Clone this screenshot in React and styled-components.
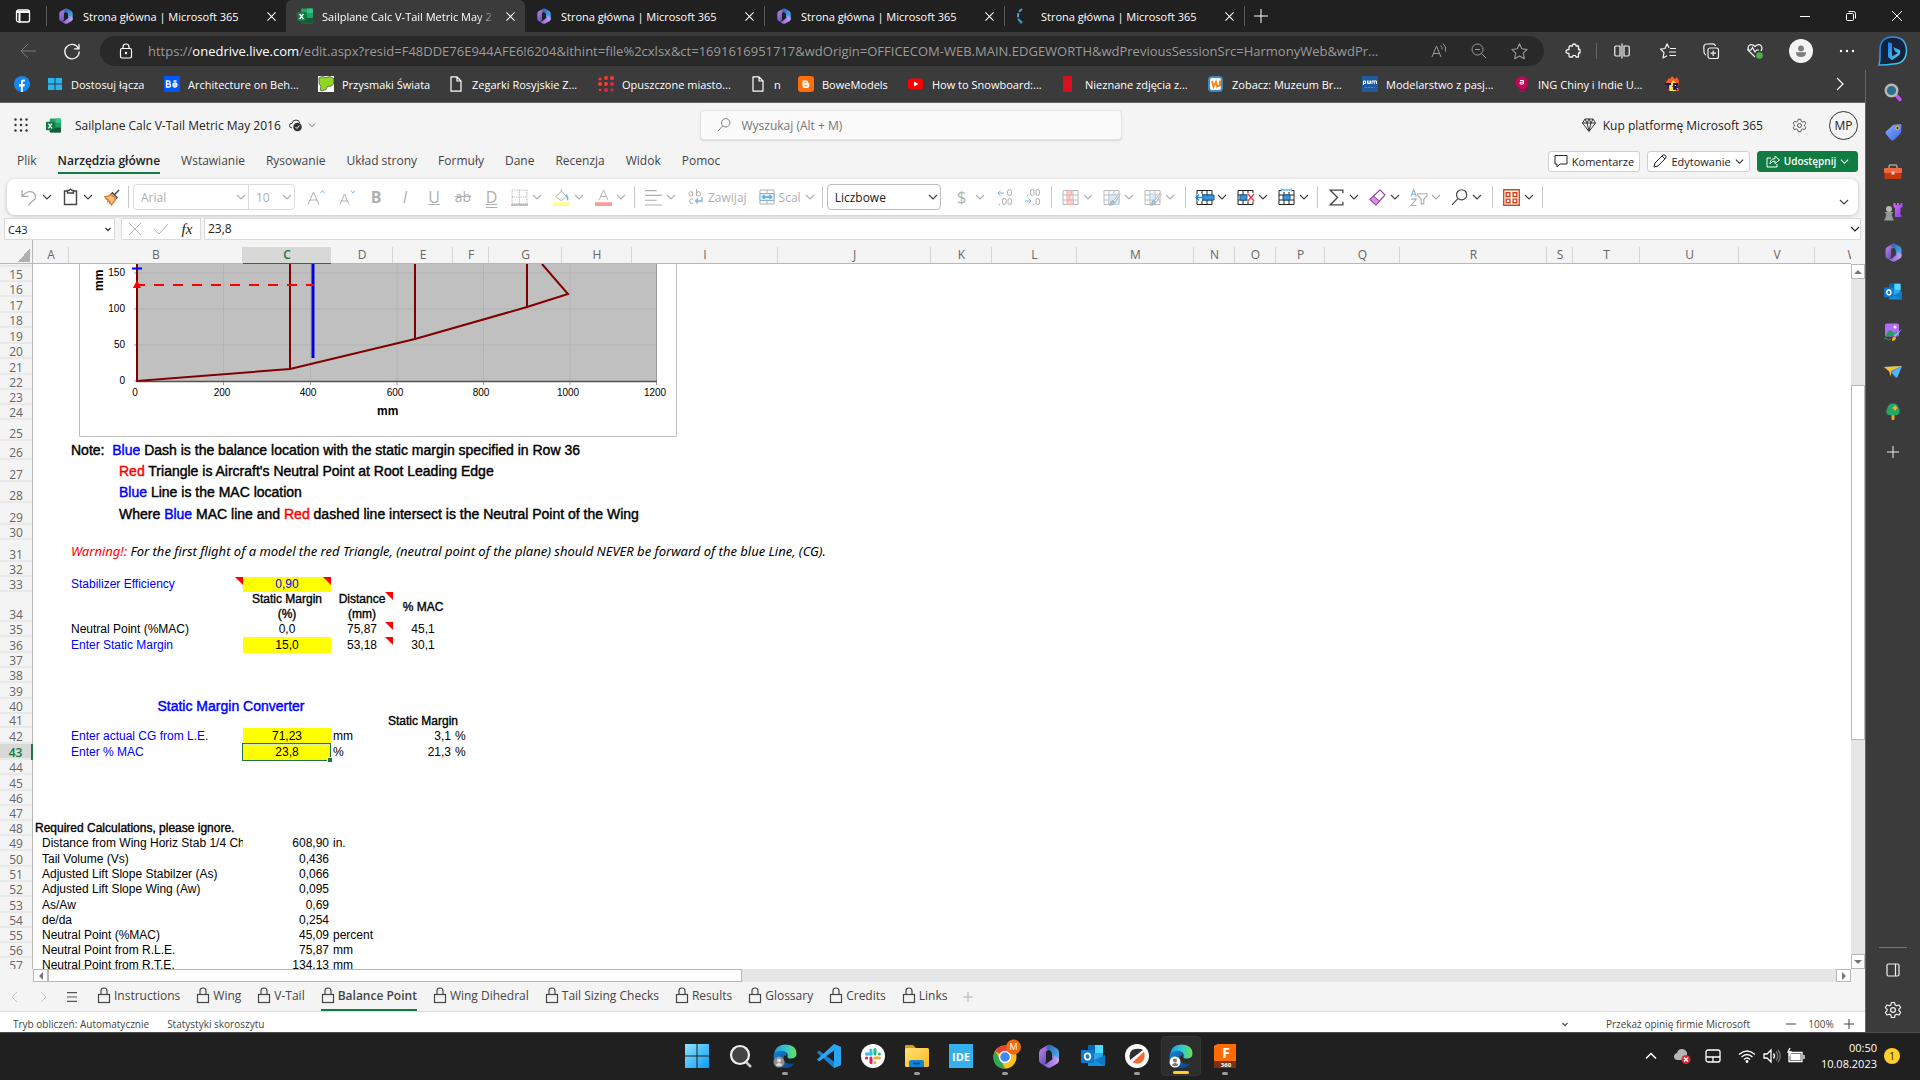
import { Fragment } from 'react';
import styled, { createGlobalStyle, css } from 'styled-components';

const GlobalStyle = createGlobalStyle`
  * {
    box-sizing: border-box;
  }

  body {
    margin: 0;
    font-family: 'Open Sans', 'Noto Sans', sans-serif;
    font-size: 12px;
    color: #333;
    background-color: #202020;
  }

  button, input, select {
    font-family: inherit;
    font-size: inherit;
    color: inherit;
    margin: 0;
  }

  a {
    color: inherit;
    text-decoration: none;
  }
`;

/* ---------- icons ---------- */

const Svg = styled.svg`
  display: block;
  flex: none;
  width: ${({ $w }) => $w || 16}px;
  height: ${({ $h, $w }) => $h || $w || 16}px;
  overflow: visible;
`;

const Line = ({ w, h, box = '0 0 16 16', color = 'currentColor', sw = 1, children }) => (
  <Svg $w={w} $h={h} viewBox={box} fill="none" stroke={color} strokeWidth={sw} aria-hidden="true">
    {children}
  </Svg>
);

const Defs = () => (
  <Svg $w={1} $h={1} aria-hidden="true">
    <defs>
      <linearGradient id="m365a" x1="0" y1="0" x2="1" y2="1">
        <stop offset="0" stopColor="#c48bea" />
        <stop offset="1" stopColor="#4a3bb0" />
      </linearGradient>
      <linearGradient id="m365b" x1="0" y1="0" x2="1" y2="1">
        <stop offset="0" stopColor="#2a56b8" />
        <stop offset="1" stopColor="#56c3f5" />
      </linearGradient>
      <linearGradient id="m365c" x1="0" y1="0" x2="1" y2="0">
        <stop offset="0" stopColor="#6a5bd0" />
        <stop offset="1" stopColor="#d59bf0" />
      </linearGradient>
      <linearGradient id="edgeTop" x1="0" y1="0" x2="1" y2="0">
        <stop offset="0" stopColor="#1c9de0" />
        <stop offset="0.5" stopColor="#2fc3d6" />
        <stop offset="1" stopColor="#6be34c" />
      </linearGradient>
      <linearGradient id="edgeLow" x1="0" y1="0" x2="1" y2="1">
        <stop offset="0" stopColor="#1683d8" />
        <stop offset="1" stopColor="#0c3f80" />
      </linearGradient>
      <linearGradient id="win" x1="0" y1="0" x2="1" y2="1">
        <stop offset="0" stopColor="#8fe3ff" />
        <stop offset="1" stopColor="#0a9bf5" />
      </linearGradient>
      <linearGradient id="bing" x1="0" y1="0" x2="1" y2="1">
        <stop offset="0" stopColor="#1a78f0" />
        <stop offset="1" stopColor="#4fd8f0" />
      </linearGradient>
      <linearGradient id="folder" x1="0" y1="0" x2="1" y2="1">
        <stop offset="0" stopColor="#ffe27a" />
        <stop offset="1" stopColor="#fbb81a" />
      </linearGradient>
      <linearGradient id="purple" x1="0" y1="0" x2="1" y2="1">
        <stop offset="0" stopColor="#d36bff" />
        <stop offset="1" stopColor="#8a3fe8" />
      </linearGradient>
      <linearGradient id="tagBlue" x1="0" y1="0" x2="1" y2="1">
        <stop offset="0" stopColor="#86b4ff" />
        <stop offset="1" stopColor="#3f63e8" />
      </linearGradient>
    </defs>
  </Svg>
);

const Chevron = ({ w = 10, color = 'currentColor' }) => (
  <Line w={w} box="0 0 10 10" color={color} sw={1.2}><path d="M1 3l4 4 4-4" /></Line>
);

const M365 = ({ w = 16 }) => (
  <Svg $w={w} viewBox="0 0 24 24" aria-hidden="true">
    <path d="M11 1L4 5Q2 6.300 2 9v7q0 2.500 2 3.500l1 .5q4 1 4-3V9q0-2 2-3l4-2-2-3z" fill="url(#m365a)" />
    <path d="M11 1q2-.8 4 .5l5 3Q22 6 22 8v8q0 2-2 3.300L15 14V10q0-2-1.500-3L9 4.500z" fill="url(#m365b)" />
    <path d="M4 19.500q4 2 7-1l4-3q2-1.500 2-4l5 3v2q0 2-2 3.200l-6 3.500q-2 1-4 0z" fill="url(#m365c)" />
  </Svg>
);

const ExcelLogo = ({ w = 16 }) => (
  <Svg $w={w} viewBox="0 0 16 16" aria-hidden="true">
    <rect x="4" y="0.500" width="12" height="15" rx="1" fill="#21a366" />
    <path d="M10 .5h5q1 0 1 1V5h-6z" fill="#33c481" />
    <path d="M4 5h6v5H4z" fill="#107c41" />
    <path d="M4 10h12v4.500q0 1-1 1H5q-1 0-1-1z" fill="#185c37" />
    <rect x="0" y="4" width="9" height="9" rx="1" fill="#107c41" />
    <path d="M2.600 6l3.800 5M6.400 6l-3.800 5" stroke="#fff" strokeWidth="1.300" />
  </Svg>
);

const Lock = ({ w = 14, h = 18, color }) => (
  <Line w={w} h={h} box="0 0 14 18" color={color} sw={1.2}>
    <rect x="1.500" y="7.500" width="11" height="8" />
    <path d="M4 7.500V4q0-3 3-3t3 3v3.500" />
  </Line>
);

const PageIcon = () => (
  <Line w={16} color="#fff" sw={1.2}>
    <path d="M3 .8h6L13 5v10.200H3zM9 .8V5h4" strokeLinejoin="round" />
  </Line>
);

const EdgeLogo = ({ person = '#8d8d8d', face = '#ddd' }) => (
  <Svg $w={24} viewBox="0 0 24 24" aria-hidden="true">
    <path d="M1 11Q2 .5 12.500.5 23.500 1 23.500 9.500q0 5-6 5-3.500 0-3-2 1-4-3.500-5Q5 7 1 11z" fill="url(#edgeTop)" />
    <path d="M1 10q4-4.500 9-3 4 1 3.500 4-4 1-3 5 2 5 11 3.500-3 4.500-9 4.500Q1 23 .5 12.500z" fill="url(#edgeLow)" />
    <circle cx="6" cy="18" r="5.500" fill={person} />
    <circle cx="6" cy="16.500" r="2" fill={face} />
    <path d="M3 21.500q0-2.500 3-2.500t3 2.500q-3 1.500-6 0z" fill={face} />
  </Svg>
);

const OutlookLogo = ({ w = 18 }) => (
  <Svg $w={w} viewBox="0 0 24 24" aria-hidden="true">
    <rect x="7" y="1" width="15" height="16" rx="1" fill="#28a8ea" />
    <path d="M7 1h7v8H7z" fill="#0364b8" />
    <path d="M14 1h8v8h-8z" fill="#50d9ff" />
    <path d="M7 12l9 5 8-6v11H7z" fill="#1490df" />
    <path d="M24 11v11L13 16z" fill="#0a5fb0" opacity="0.500" />
    <rect x="0" y="6" width="13" height="13" rx="1" fill="#0f78d4" />
    <ellipse cx="6.500" cy="12.500" rx="2.800" ry="3.200" fill="none" stroke="#fff" strokeWidth="1.800" />
  </Svg>
);

const Gear = ({ w = 16, color }) => (
  <Line w={w} box="0 0 24 24" color={color} sw={1.6}>
    <path d="M10 2h4l.8 3.200 2.200 1.200 3.200-1 2 3.500-2.400 2.300v1.600l2.400 2.300-2 3.500-3.200-1-2.200 1.200L14 22h-4l-.8-3.200L7 17.600l-3.200 1-2-3.500 2.400-2.300v-1.600L1.800 8.900l2-3.500 3.200 1 2.200-1.200z" strokeLinejoin="round" />
    <circle cx="12" cy="12" r="3.200" />
  </Line>
);

const SearchGlyph = ({ w = 16, color }) => (
  <Line w={w} color={color} sw={1.1}><circle cx="10" cy="5.500" r="4.800" /><path d="M6.500 9L1 15" /></Line>
);

/* ---------- browser frame ---------- */

const Screen = styled.div`
  display: flex;
  flex-direction: column;
  height: 100vh;
  overflow: hidden;
`;

const TabStrip = styled.nav`
  display: flex;
  align-items: stretch;
  flex: none;
  height: 32px;
  background-color: #202020;
  color: #fff;
`;

const IconButton = styled.button`
  display: flex;
  align-items: center;
  justify-content: center;
  flex: none;
  width: ${({ $w }) => $w || 44}px;
  height: ${({ $h }) => ($h ? `${$h}px` : 'auto')};
  padding: 0;
  border: 0;
  background: none;
  color: ${({ $color }) => $color || 'inherit'};
`;

const TabItem = styled.div`
  display: flex;
  align-items: center;
  flex: 0 1 239px;
  min-width: 0;
  padding: 0 3px 0 11px;
  border-radius: 6px 6px 0 0;
  background-color: ${({ $active }) => ($active ? '#3b3b3b' : 'transparent')};
`;

const TabLink = styled.a`
  display: flex;
  align-items: center;
  gap: 9px;
  flex: 1;
  min-width: 0;
`;

const TabTitle = styled.span`
  flex: 1;
  overflow: hidden;
  white-space: nowrap;
  font-size: 11px;
  ${({ $fade }) => $fade && css`
    mask-image: linear-gradient(to right, #000 88%, transparent);
  `}
`;

const TabDivider = styled.span`
  align-self: center;
  width: 1px;
  height: 20px;
  background-color: #5a5a5a;
`;

const WindowControls = styled.div`
  display: flex;
  margin-left: auto;
`;

const Toolbar = styled.header`
  display: flex;
  align-items: center;
  flex: none;
  height: 38px;
  padding: 0 3px 0 6px;
  background-color: #3b3b3b;
  color: #f2f2f2;
`;

const Address = styled.label`
  display: flex;
  align-items: center;
  flex: 1;
  min-width: 0;
  height: 30px;
  margin: 0 5px 0 6px;
  padding: 0 5px 0 18px;
  border-radius: 15px;
  background-color: #292929;
  color: #fff;
`;

const Url = styled.span`
  flex: 1;
  min-width: 0;
  margin-left: 14px;
  white-space: nowrap;
  font-size: 13px;
  color: #9b9b9b;

  b {
    font-weight: 400;
    color: #fff;
  }
`;

const ToolDivider = styled.span`
  width: 1px;
  height: 16px;
  background-color: #666;
`;

const Avatar = styled.span`
  display: flex;
  align-items: center;
  justify-content: center;
  width: 24px;
  height: 24px;
  border-radius: 50%;
  background-color: #f4f4f4;
`;

const Middle = styled.div`
  display: flex;
  flex: 1;
  min-height: 0;
`;

const PageColumn = styled.div`
  display: flex;
  flex-direction: column;
  flex: 1;
  min-width: 0;
`;

const Bookmarks = styled.nav`
  display: flex;
  align-items: center;
  flex: none;
  gap: 17px;
  height: 33px;
  padding: 0 9px 4px 14px;
  border-bottom: 1px solid #666;
  background-color: #3b3b3b;
  color: #fff;
`;

const Bookmark = styled.a`
  display: flex;
  align-items: center;
  gap: 8px;
  white-space: nowrap;
  font-size: 11px;
`;

const BookmarkText = styled.span`
  width: ${({ $w }) => $w}px;
`;

const BookmarkMore = styled.button`
  margin-left: auto;
  width: 32px;
  border: 0;
  background: none;
  display: flex;
  justify-content: center;
`;

const SideBar = styled.aside`
  display: flex;
  flex-direction: column;
  align-items: center;
  flex: none;
  width: 55px;
  padding: 2px 0;
  border-left: 1px solid #666;
  background-color: #3b3b3b;
  color: #f0f0f0;
`;

const SideSpacer = styled.span`
  flex: 1;
`;

const SideRule = styled.span`
  width: 28px;
  height: 1px;
  margin-bottom: 2px;
  background-color: #777;
`;

/* ---------- excel header ---------- */

const ExcelTop = styled.header`
  display: grid;
  grid-template-columns: 14fr 422px 15fr;
  align-items: center;
  flex: none;
  height: 44px;
  padding: 0 7px 0 14px;
  background-color: #f4f4f4;
  color: #222;
`;

const FileInfo = styled.div`
  display: flex;
  align-items: center;
  gap: 6px;
  font-size: 12px;
`;

const FileName = styled.span`
  margin-left: 8px;
  margin-right: 2px;
`;

const LogoSlot = styled.span`
  margin-left: 12px;
`;

const SearchBox = styled.label`
  display: flex;
  align-items: center;
  gap: 10px;
  height: 30px;
  padding-left: 16px;
  border: 1px solid #e4e4e4;
  border-radius: 4px;
  background-color: #fafafa;
  box-shadow: 0 1px 2px rgba(0, 0, 0, 0.12);
  color: #666;

  input {
    flex: 1;
    border: 0;
    padding: 0;
    outline: 0;
    background: none;
    font-size: 12px;
  }

  input::placeholder {
    color: #767676;
  }
`;

const AccountArea = styled.div`
  display: flex;
  align-items: center;
  justify-content: flex-end;
  font-size: 12px;
`;

const BuyLink = styled.a`
  display: flex;
  align-items: center;
  gap: 7px;
  margin-right: 15px;
`;

const UserBadge = styled.button`
  width: 29px;
  height: 29px;
  margin-left: 7px;
  padding: 0;
  border: 1px solid #333;
  border-radius: 50%;
  background: none;
  font-size: 12px;
`;

const MenuRow = styled.div`
  display: flex;
  align-items: center;
  flex: none;
  height: 32px;
  padding: 0 7px 4px 17px;
  background-color: #f4f4f4;
`;

const MenuTabs = styled.nav`
  display: flex;
  gap: 21px;
  height: 26px;
  flex: 1;
`;

const MenuTab = styled.a`
  display: flex;
  align-items: center;
  font-size: 12px;
  color: #444;
  border-bottom: 2px solid transparent;
  ${({ $active }) => $active && css`
    font-weight: 600;
    color: #222;
    border-color: #107c41;
  `}
`;

const ActionGroup = styled.div`
  display: flex;
  gap: 7px;
`;

const Action = styled.button`
  display: flex;
  align-items: center;
  justify-content: center;
  gap: 4px;
  width: ${({ $w }) => $w}px;
  height: 21px;
  padding: 0;
  border: 1px solid ${({ $primary }) => ($primary ? '#107c41' : '#cfcfcf')};
  border-radius: 3px;
  background-color: ${({ $primary }) => ($primary ? '#107c41' : '#fff')};
  color: ${({ $primary }) => ($primary ? '#fff' : '#222')};
  font-size: ${({ $primary }) => ($primary ? 10 : 11)}px;
  font-weight: ${({ $primary }) => ($primary ? 600 : 400)};
`;

/* ---------- ribbon ---------- */

const RibbonWrap = styled.div`
  flex: none;
  padding: 0 7px 3px;
  background-color: #f4f4f4;
`;

const Ribbon = styled.div`
  display: flex;
  align-items: center;
  height: 36px;
  padding: 0 9px 0 14px;
  border-radius: 8px;
  background-color: #fff;
  box-shadow: 0 1px 4px rgba(0, 0, 0, 0.2);
  color: #444;
`;

const Group = styled.div`
  display: flex;
  align-items: center;
  gap: ${({ $gap }) => $gap ?? 10}px;
  padding-right: ${({ $end }) => $end ?? 8}px;
  padding-left: ${({ $start }) => $start ?? 10}px;
  border-right: 1px solid #c8c8c8;
  height: 22px;
  color: ${({ $dim }) => ($dim ? '#b0b0b0' : '#444')};

  &:first-child {
    padding-left: 0;
  }
`;

const Tool = styled.button`
  display: flex;
  align-items: center;
  gap: 4px;
  padding: 0;
  border: 0;
  background: none;
  font-size: 12px;
`;

const Glyph = styled.span`
  width: ${({ $w }) => $w || 18}px;
  text-align: center;
  font-size: ${({ $size }) => $size || 16}px;
  line-height: 20px;
  font-weight: ${({ $bold }) => ($bold ? 700 : 400)};
  font-style: ${({ $italic }) => ($italic ? 'italic' : 'normal')};
  text-decoration: ${({ $deco }) => $deco || 'none'};
`;

const FontBox = styled.div`
  display: flex;
  height: 26px;
  border: 1px solid #dcdcdc;
  border-radius: 4px;
`;

const SelectShell = styled.label`
  display: flex;
  align-items: center;
  width: ${({ $w }) => $w}px;
  height: ${({ $framed }) => ($framed ? '26px' : '24px')};
  padding: 0 2px 0 7px;
  border: ${({ $framed }) => ($framed ? '1px solid #bdbdbd' : '0')};
  border-radius: ${({ $framed }) => ($framed ? '4px' : '0')};
  color: ${({ $framed }) => ($framed ? '#222' : 'inherit')};

  & + & {
    border-left: 1px solid #dcdcdc;
  }

  select {
    flex: 1;
    min-width: 0;
    border: 0;
    padding: 0;
    appearance: none;
    background: none;
    font-size: 12px;
    opacity: 1;
  }
`;

const RibbonEnd = styled.button`
  margin: 10px 0 0 auto;
  padding: 0;
  border: 0;
  background: none;
`;

const FormulaBar = styled.div`
  display: flex;
  flex: none;
  height: 22px;
  padding: 0 4px;
  background-color: #f4f4f4;
`;

const NameBox = styled.label`
  display: flex;
  align-items: center;
  width: 111px;
  margin-right: 6px;
  padding: 0 3px;
  border: 1px solid #dadada;
  background-color: #fff;

  input {
    width: 100%;
    border: 0;
    padding: 0;
    outline: 0;
    font-size: 11px;
    color: #222;
  }
`;

const FxBox = styled.div`
  display: flex;
  align-items: center;
  width: 80px;
  margin-right: 3px;
  border: 1px solid #dadada;
  background-color: #fff;
`;

const FxLabel = styled.button`
  width: 28px;
  padding: 0;
  border: 0;
  background: none;
  font-family: 'Liberation Serif', serif;
  font-style: italic;
  font-size: 15px;
  color: #222;
`;

const FormulaInput = styled.label`
  display: flex;
  align-items: center;
  flex: 1;
  padding: 0 0 0 3px;
  border: 1px solid #dadada;
  background-color: #fff;
  color: #222;

  input {
    flex: 1;
    border: 0;
    padding: 0 0 2px;
    outline: 0;
    font-size: 12px;
    color: #222;
  }
`;

/* ---------- sheet ---------- */

const SheetArea = styled.main`
  display: grid;
  grid-template-columns: 1fr 14px;
  grid-template-rows: 1fr 13px;
  flex: 1;
  min-height: 0;
  background-color: #f4f4f4;
`;

const SheetView = styled.div`
  position: relative;
  overflow: hidden;
  background: linear-gradient(#f4f4f4 24px, #fff 24px);
`;

const Sheet = styled.table`
  table-layout: fixed;
  width: 1891px;
  border-collapse: separate;
  border-spacing: 0;
  font-family: 'Liberation Sans', Arial, sans-serif;
  font-size: 12px;
  line-height: 13px;
  color: #000;
`;

const HeadCell = styled.th`
  height: 24px;
  padding: 6px 0 0;
  font-family: 'Open Sans', sans-serif;
  font-size: 12px;
  line-height: 16px;
  font-weight: ${({ $on }) => ($on ? 600 : 400)};
  color: ${({ $on }) => ($on ? '#107c41' : '#666')};
  border-bottom: 1px solid ${({ $on }) => ($on ? '#217346' : '#b8b8b8')};
  background: ${({ $on }) => ($on
    ? 'linear-gradient(#f4f4f4 7px, #d8d8d6 7px)'
    : 'linear-gradient(to left, #d6d6d6 1px, transparent 1px) no-repeat 0 7px #f4f4f4')};
`;

const Corner = styled.th`
  height: 24px;
  padding: 0;
  border-bottom: 1px solid #b8b8b8;
  border-right: 1px solid #b8b8b8;
  background-color: #f4f4f4;

  &::after {
    content: '';
    display: block;
    margin: 7px 2px 0 17px;
    height: 13px;
    background: linear-gradient(to bottom right, transparent 50%, #b0b0b0 50%);
  }
`;

const RowHead = styled.th`
  height: ${({ $h }) => $h}px;
  padding: 0 0 1px;
  vertical-align: bottom;
  font-family: 'Open Sans', sans-serif;
  font-size: 12px;
  line-height: 13px;
  font-weight: ${({ $on }) => ($on ? 600 : 400)};
  color: ${({ $on }) => ($on ? '#107c41' : '#666')};
  background-color: ${({ $on }) => ($on ? '#d8d8d6' : '#f4f4f4')};
  box-shadow: inset 0 -2px #e9e9e9;
  border-right: ${({ $on }) => ($on ? '2px solid #217346' : '1px solid #b8b8b8')};
`;

const Cell = styled.td`
  position: relative;
  padding: 0;
  overflow: ${({ $clip }) => ($clip ? 'hidden' : 'visible')};
  background-color: ${({ $fill }) => $fill || 'transparent'};
`;

const CellText = styled.div`
  display: flex;
  justify-content: ${({ $align }) => $align || 'flex-start'};
  align-items: center;
  padding: 0 2px 0 ${({ $indent }) => $indent || 2}px;
  height: 13px;
  white-space: pre;
  text-align: center;
  color: ${({ $color }) => $color || 'inherit'};
  ${({ $kind }) => ['note', 'title', 'strong'].includes($kind) && css`
    line-height: 15px;
    -webkit-text-stroke: 0.03em;
  `}
  ${({ $kind }) => ['note', 'title'].includes($kind) && css`
    font-size: 14px;
  `}
  ${({ $kind }) => $kind === 'warning' && css`
    font-family: 'Noto Sans', sans-serif;
    font-style: italic;
    font-size: 13px;
  `}
`;

const Tint = styled.span`
  color: ${({ $c }) => $c};
`;

const CommentMark = styled.span`
  position: absolute;
  top: 0;
  right: 0;
  border-top: 8px solid #f00;
  border-left: 8px solid transparent;
`;

const Selection = styled.span`
  position: absolute;
  inset: -1px 0 -1px -1px;
  border: 1px solid #217346;
  box-shadow: inset 0 0 0 1px #d9e8c0;

  &::after {
    content: '';
    position: absolute;
    right: -2px;
    bottom: -2px;
    width: 4px;
    height: 4px;
    background-color: #217346;
    outline: 1px solid #fff;
  }
`;

const ChartFloat = styled.svg`
  position: absolute;
  top: 24px;
  left: 79px;
  width: 598px;
  height: 173px;
  font-family: 'Liberation Sans', Arial, sans-serif;
  font-size: 10px;
`;

const ScrollTrack = styled.div`
  display: flex;
  flex-direction: ${({ $vertical }) => ($vertical ? 'column' : 'row')};
  margin: ${({ $vertical }) => ($vertical ? '24px 0 0' : '0 0 0 33px')};
  background-color: #e6e6e6;
`;

const ScrollArrow = styled.button`
  display: flex;
  align-items: center;
  justify-content: center;
  flex: none;
  width: ${({ $vertical }) => ($vertical ? 'auto' : '15px')};
  height: ${({ $vertical }) => ($vertical ? '15px' : 'auto')};
  padding: 0;
  border: 1px solid #b8b8b8;
  background-color: #fff;
  color: #777;
`;

const ScrollThumb = styled.div`
  flex: ${({ $size }) => $size} 0 0;
  border: 1px solid #b8b8b8;
  background-color: #fff;
`;

const ScrollGap = styled.div`
  flex: ${({ $size }) => $size} 0 0;
`;

const SheetTabs = styled.nav`
  display: flex;
  align-items: stretch;
  flex: none;
  gap: 16px;
  height: 30px;
  padding-left: 4px;
  border-bottom: 1px solid #dedede;
  background-color: #f4f4f4;
`;

const TabNav = styled.div`
  display: flex;
  margin-right: -3px;
`;

const SheetTab = styled.a`
  display: flex;
  align-items: center;
  gap: 3px;
  font-size: 12px;
  color: #444;
  border-bottom: 2px solid transparent;
  ${({ $active }) => $active && css`
    font-weight: 600;
    border-color: #107c41;
  `}
`;

const StatusBar = styled.footer`
  display: flex;
  align-items: center;
  flex: none;
  height: 20px;
  padding: 3px 9px 0 13px;
  background-color: #fff;
  font-size: 10px;
  color: #444;

  a {
    margin: 0 32px 0 38px;
  }
`;

const StatusItem = styled.span`
  margin-right: 18px;
`;

const StatusEnd = styled.span`
  display: flex;
  align-items: center;
  margin-left: auto;
`;

/* ---------- taskbar ---------- */

const Taskbar = styled.footer`
  display: grid;
  grid-template-columns: 1fr auto 1fr;
  flex: none;
  height: 48px;
  border-top: 1px solid #4a4a4a;
  background-color: #202020;
  color: #fff;
`;

const Apps = styled.div`
  grid-column: 2;
  display: flex;
  gap: 4px;
  padding: 3px 0 3px 1px;
`;

const AppButton = styled.button`
  position: relative;
  display: flex;
  align-items: center;
  justify-content: center;
  width: 40px;
  height: 40px;
  padding: 0;
  border: ${({ $active }) => ($active ? '1px solid #363636' : '0')};
  border-radius: 4px;
  background-color: ${({ $active }) => ($active ? '#2d2d2d' : 'transparent')};
  ${({ $open, $active }) => ($open || $active) && css`
    &::after {
      content: '';
      position: absolute;
      bottom: 1px;
      width: ${$active ? 16 : 6}px;
      height: 3px;
      border-radius: 2px;
      background-color: ${$active ? '#ffd02b' : '#9a9a9a'};
    }
  `}
`;

const Tray = styled.div`
  display: flex;
  align-items: center;
  justify-content: flex-end;
  gap: 7px;
  padding: 0 20px 2px 0;
`;

const Clock = styled.time`
  width: 60px;
  text-align: right;
  font-size: 11px;
  line-height: 16px;
`;

const Badge = styled.span`
  width: 16px;
  height: 16px;
  border-radius: 50%;
  background-color: #ffd02b;
  color: #222;
  font-size: 10px;
  line-height: 16px;
  text-align: center;
`;

/* ---------- data ---------- */

const browserTabs = [
  { title: 'Strona główna | Microsoft 365', icon: <M365 /> },
  { title: 'Sailplane Calc V-Tail Metric May 2', icon: <ExcelLogo />, active: true },
  { title: 'Strona główna | Microsoft 365', icon: <M365 /> },
  { title: 'Strona główna | Microsoft 365', icon: <M365 /> },
  {
    title: 'Strona główna | Microsoft 365',
    icon: (
      <Line color="#4aa3e0" sw={2}>
        <path d="M6 1Q2 3.500 2 8t2.500 5" strokeDasharray="4 1.500" />
        <circle cx="5" cy="14" r="0.500" />
      </Line>
    ),
  },
];

const bookmarks = [
  {
    icon: (
      <Svg viewBox="0 0 16 16"><circle cx="8" cy="8" r="8" fill="#1488f0" /><path d="M7 16v-5.500H5V8h2V6q0-2.500 2.500-2.500h1.300v2H9.700q-.9 0-.9 1V8h2l-.4 2.500H8.800V16z" fill="#fff" /></Svg>
    ),
  },
  {
    text: 'Dostosuj łącza', w: 76,
    icon: (
      <Svg viewBox="0 0 16 16"><path d="M1 2h6.500v5.500H1zM8.500 2H15v5.500H8.500zM1 8.500h6.500V14H1zM8.500 8.500H15V14H8.500z" fill="#26b5f0" /></Svg>
    ),
  },
  {
    text: 'Architecture on Beh...', w: 113,
    icon: (
      <Svg viewBox="0 0 16 16">
        <rect width="16" height="16" fill="#0057ff" />
        <path d="M2.500 5v6h2.200q1.800 0 1.800-1.600T4.700 8Q6 8 6 6.500T4.500 5zM2.500 8h2" fill="none" stroke="#fff" strokeWidth="1.400" />
        <path d="M9 9h4q0-2-2-2T9 9t2 2q1.500 0 2-.8M9.500 5h3" fill="none" stroke="#fff" strokeWidth="1.300" />
      </Svg>
    ),
  },
  {
    text: 'Przysmaki Świata', w: 89,
    icon: (
      <Svg viewBox="0 0 16 16">
        <rect width="16" height="16" fill="#fff" />
        <path d="M1 2l3-1.500 4 1 4-1 3.500 2V8l-2 2-4 .5-1.500 3L4 15l-2-1 1-4-2-2z" fill="#8ed61f" stroke="#333" strokeWidth="0.600" />
      </Svg>
    ),
  },
  { text: 'Zegarki Rosyjskie Z...', w: 109, icon: <PageIcon /> },
  {
    text: 'Opuszczone miasto...', w: 111,
    icon: (
      <Svg viewBox="0 0 16 16" fill="#ff3b30">
        <circle cx="2" cy="3" r="1.500" /><circle cx="8" cy="2" r="2" /><circle cx="14" cy="2" r="2" />
        <circle cx="2" cy="8" r="2" /><circle cx="8" cy="8" r="2" /><circle cx="14" cy="8" r="2" fill="#e8204c" />
        <circle cx="2" cy="14" r="1.300" /><circle cx="8" cy="14" r="2" fill="#e8204c" /><circle cx="14" cy="14" r="1.600" fill="#e8204c" />
      </Svg>
    ),
  },
  { text: 'n', w: 7, icon: <PageIcon /> },
  {
    text: 'BoweModels', w: 69,
    icon: (
      <Svg viewBox="0 0 16 16"><rect width="16" height="16" rx="3" fill="#ff6c0a" /><path d="M5 4.500h3q2.300 0 2.300 2 .2 1 1 1v2.200Q11.300 12 9 12H7q-2.500 0-2.500-2.300V5z" fill="#fff" /><path d="M6.500 6.700h1.800M6.500 9.700h3" stroke="#ff6c0a" /></Svg>
    ),
  },
  {
    text: 'How to Snowboard:...', w: 112,
    icon: (
      <Svg viewBox="0 0 16 16"><rect y="2.500" width="15" height="11" rx="3" fill="#f00" /><path d="M6 5.500l4.500 2.500L6 10.500z" fill="#fff" /></Svg>
    ),
  },
  { text: 'Nieznane zdjęcia z...', w: 106, icon: <Svg viewBox="0 0 16 16"><rect x="2" width="9" height="16" fill="#d8101f" /></Svg> },
  {
    text: 'Zobacz: Muzeum Br...', w: 113,
    icon: (
      <Svg viewBox="0 0 16 16"><rect x="1" y="1" width="13" height="14" rx="3" fill="#fff" stroke="#3c8ac0" strokeWidth="2" /><path d="M4 5l1.500 5.500L8 6l1 4.500 3-1V4.500" fill="none" stroke="#f08a24" strokeWidth="2" /></Svg>
    ),
  },
  {
    text: 'Modelarstwo z pasj...', w: 111,
    icon: (
      <Svg viewBox="0 0 16 16"><rect width="16" height="16" fill="#1f5b9c" /><path d="M1.500 9V5h2v2.500h-2M5.500 4.500v3h3v-3M7 4.500v3M10 8V5h4.500v3M12.300 5v3" stroke="#fff" fill="none" /><path d="M3 11.500h10" stroke="#8a7a6a" strokeDasharray="2 1" /></Svg>
    ),
  },
  {
    text: 'ING Chiny i Indie U...', w: 110,
    icon: (
      <Svg viewBox="0 0 16 16"><path d="M8 0l5 2.500 1 6L11 13H6L2 9V3z" fill="#c4065a" /><path d="M5 15h6" stroke="#c4065a" strokeWidth="1.500" /><path d="M6 4.500h3.500V8H6.200V6.200h3" fill="none" stroke="#fff" /></Svg>
    ),
  },
  {
    icon: (
      <Svg viewBox="0 0 16 16"><path d="M1 6l3-4 1 1 2-3 3 3 2-2 2 4-1 6 1 4H4l-2-4z" fill="#ff5a1f" /><path d="M4 11l2-4 2-3 4 4 1 4-2 3H5z" fill="#ffe04a" /><path d="M0 8h6M3 8v5M9 14V8h3v3H9l3 3" stroke="#1a1a5a" strokeWidth="1.800" fill="none" /></Svg>
    ),
  },
];

const menuTabs = ['Plik', 'Narzędzia główne', 'Wstawianie', 'Rysowanie', 'Układ strony', 'Formuły', 'Dane', 'Recenzja', 'Widok', 'Pomoc'];

const sheetTabs = ['Instructions', 'Wing', 'V-Tail', 'Balance Point', 'Wing Dihedral', 'Tail Sizing Checks', 'Results', 'Glossary', 'Credits', 'Links'];

const columns = [
  ['A', 36], ['B', 174], ['C', 88], ['D', 62], ['E', 60], ['F', 36], ['G', 73], ['H', 70],
  ['I', 146], ['J', 153], ['K', 61], ['L', 85], ['M', 117], ['N', 41], ['O', 41], ['P', 49],
  ['Q', 75], ['R', 147], ['S', 26], ['T', 67], ['U', 99], ['V', 76], ['W', 76],
];

const BLUE = '#0000ff';
const RED = '#ff0000';
const YELLOW = '#ffff00';

const calc = (label, value, unit) => ({
  A: { text: label, span: 2, indent: 9, clip: true },
  C: { text: value, align: 'flex-end' },
  D: { text: unit },
});

const rows = [
  { n: '', h: 3 },
  { n: 15, h: 15 }, { n: 16, h: 15 }, { n: 17, h: 16 }, { n: 18, h: 15 }, { n: 19, h: 16 },
  { n: 20, h: 15 }, { n: 21, h: 16 }, { n: 22, h: 15 }, { n: 23, h: 15 }, { n: 24, h: 15 }, { n: 25, h: 21 },
  {
    n: 26, h: 19,
    cells: { B: { kind: 'note', text: <span>Note:{'  '}<Tint $c={BLUE}>Blue</Tint> Dash is the balance location with the static margin specified in Row 36</span> } },
  },
  {
    n: 27, h: 22,
    cells: { B: { kind: 'note', indent: 50, text: <span><Tint $c={RED}>Red</Tint> Triangle is Aircraft's Neutral Point at Root Leading Edge</span> } },
  },
  {
    n: 28, h: 21,
    cells: { B: { kind: 'note', indent: 50, text: <span><Tint $c={BLUE}>Blue</Tint> Line is the MAC location</span> } },
  },
  {
    n: 29, h: 22,
    cells: { B: { kind: 'note', indent: 50, text: <span>Where <Tint $c={BLUE}>Blue</Tint> MAC line and <Tint $c={RED}>Red</Tint> dashed line intersect is the Neutral Point of the Wing</span> } },
  },
  { n: 30, h: 15 },
  {
    n: 31, h: 22,
    cells: { B: { kind: 'warning', text: <span><Tint $c={RED}>Warning!:</Tint> For the first flight of a model the red Triangle, (neutral point of the plane) should NEVER be forward of the blue Line, (CG).</span> } },
  },
  { n: 32, h: 15 },
  {
    n: 33, h: 15,
    cells: {
      B: { text: 'Stabilizer Efficiency', color: BLUE, mark: true },
      C: { text: '0,90', align: 'center', fill: YELLOW, mark: true, color: BLUE },
    },
  },
  {
    n: 34, h: 30,
    cells: {
      C: { text: 'Static Margin\n(%)', kind: 'strong', align: 'center' },
      D: { text: 'Distance\n(mm)', kind: 'strong', align: 'center', mark: true },
      E: { text: '% MAC', kind: 'strong', align: 'center' },
    },
  },
  {
    n: 35, h: 15,
    cells: {
      B: { text: 'Neutral Point (%MAC)' },
      C: { text: '0,0', align: 'center' },
      D: { text: '75,87', align: 'center', mark: true },
      E: { text: '45,1', align: 'center' },
    },
  },
  {
    n: 36, h: 16,
    cells: {
      B: { text: 'Enter Static Margin', color: BLUE },
      C: { text: '15,0', align: 'center', fill: YELLOW },
      D: { text: '53,18', align: 'center', mark: true },
      E: { text: '30,1', align: 'center' },
    },
  },
  { n: 37, h: 15 }, { n: 38, h: 15 }, { n: 39, h: 16 },
  { n: 40, h: 15, cells: { B: { text: 'Static Margin Converter', kind: 'title', color: BLUE, span: 3, align: 'center' } } },
  { n: 41, h: 14, cells: { E: { text: 'Static Margin', kind: 'strong', align: 'center' } } },
  {
    n: 42, h: 16,
    cells: {
      B: { text: 'Enter actual CG from L.E.', color: BLUE },
      C: { text: '71,23', align: 'center', fill: YELLOW },
      D: { text: 'mm' },
      E: { text: '3,1', align: 'flex-end' },
      F: { text: '%' },
    },
  },
  {
    n: 43, h: 16, on: true,
    cells: {
      B: { text: 'Enter % MAC', color: BLUE },
      C: { text: '23,8', align: 'center', fill: YELLOW, selected: true },
      D: { text: '%' },
      E: { text: '21,3', align: 'flex-end' },
      F: { text: '%' },
    },
  },
  { n: 44, h: 15 }, { n: 45, h: 16 }, { n: 46, h: 15 }, { n: 47, h: 15 },
  { n: 48, h: 15, cells: { A: { text: 'Required Calculations, please ignore.', kind: 'strong' } } },
  { n: 49, h: 15, cells: calc('Distance from Wing Horiz Stab 1/4 Chord', '608,90', 'in.') },
  { n: 50, h: 16, cells: calc('Tail Volume (Vs)', '0,436') },
  { n: 51, h: 15, cells: calc('Adjusted Lift Slope Stabilzer (As)', '0,066') },
  { n: 52, h: 15, cells: calc('Adjusted Lift Slope Wing (Aw)', '0,095') },
  { n: 53, h: 16, cells: calc('As/Aw', '0,69') },
  { n: 54, h: 15, cells: calc('de/da', '0,254') },
  { n: 55, h: 15, cells: calc('Neutral Point (%MAC)', '45,09', 'percent') },
  { n: 56, h: 15, cells: calc('Neutral Point from R.L.E.', '75,87', 'mm') },
  { n: 57, h: 15, cells: calc('Neutral Point from R.T.E.', '134,13', 'mm') },
];

/* ---------- parts ---------- */

const TopTabs = () => (
  <TabStrip aria-label="Karty">
    <IconButton $w={46} aria-label="Menu kart">
      <Line color="#fff" sw={1.3}><rect x="1.500" y="2" width="13" height="12" rx="2" /><path d="M2 4h12M4.500 4.500V14" strokeWidth="2" /></Line>
    </IconButton>
    <TabDivider />
    {browserTabs.map(({ title, icon, active }, i) => (
      <Fragment key={i}>
        <TabItem $active={active}>
          <TabLink href="#">
            {icon}
            <TabTitle $fade={active}>{title}</TabTitle>
          </TabLink>
          <IconButton $w={24} aria-label="Zamknij kartę">
            <Line w={9} box="0 0 10 10" color="#fff" sw={1.2}><path d="M.5.5l9 9M9.500.5l-9 9" /></Line>
          </IconButton>
        </TabItem>
        {i > 1 && <TabDivider />}
      </Fragment>
    ))}
    <IconButton $w={32} aria-label="Nowa karta">
      <Line w={14} box="0 0 14 14" color="#fff"><path d="M7 0v14M0 7h14" /></Line>
    </IconButton>
    <WindowControls>
      <IconButton $w={46} aria-label="Minimalizuj"><Line w={10} box="0 0 10 10"><path d="M0 5.500h10" /></Line></IconButton>
      <IconButton $w={46} aria-label="Przywróć">
        <Line w={10} box="0 0 10 10"><rect x="0.500" y="2.500" width="7" height="7" rx="1" /><path d="M2.500.5h5q2 0 2 2v5" /></Line>
      </IconButton>
      <IconButton $w={46} aria-label="Zamknij"><Line w={10} box="0 0 10 10"><path d="M0 0l10 10M10 0L0 10" /></Line></IconButton>
    </WindowControls>
  </TabStrip>
);

const AddressRow = () => (
  <Toolbar>
    <IconButton $color="#7a7a7a" aria-label="Wstecz"><Line><path d="M16 8H1M8 1L1 8l7 7" /></Line></IconButton>
    <IconButton $w={44} aria-label="Odśwież"><Line sw={1.3}><path d="M14.500 5.500A7.200 7.200 0 1 0 15.200 8.500M15 1v4.800h-5" /></Line></IconButton>
    <Address>
      <Line w={16} sw={1.2}><rect x="2.500" y="5.500" width="11" height="9.500" rx="1.500" /><path d="M5 5.500V4q0-3 3-3t3 3v1.500" /><circle cx="8" cy="10" r="0.600" fill="currentColor" /></Line>
      <Url>https://<b>onedrive.live.com</b>/edit.aspx?resid=F48DDE76E944AFE6!6204&amp;ithint=file%2cxlsx&amp;ct=1691616951717&amp;wdOrigin=OFFICECOM-WEB.MAIN.EDGEWORTH&amp;wdPreviousSessionSrc=HarmonyWeb&amp;wdPr...</Url>
      <IconButton $w={40} $color="#9b9b9b" aria-label="Czytaj na głos">
        <Line><path d="M1 14L5.500 3 10 14M2.500 10.500h6M9.500 2.500q2 1.500 1.500 4M12 .5q3.500 3 2.500 8" /></Line>
      </IconButton>
      <IconButton $w={40} $color="#9b9b9b" aria-label="Pomniejsz">
        <Line><circle cx="6.500" cy="6.500" r="5.500" /><path d="M10.500 10.500L15 15M4 6.500h5" /></Line>
      </IconButton>
      <IconButton $w={40} $color="#9b9b9b" aria-label="Dodaj do ulubionych">
        <Line w={17}><path d="M8 .8l2.200 4.700 5 .6-3.700 3.500 1 5.200L8 12.200l-4.500 2.600 1-5.200L.8 6.100l5-.6z" strokeLinejoin="round" /></Line>
      </IconButton>
    </Address>
    <IconButton $w={47} aria-label="Rozszerzenia">
      <Line sw={1.3}><path d="M5 3h2.500q-.2-2 1.700-2T11 3h2.500v3.500q1.500 0 1.500 0v0V10q-.2 0-1.500 0V14H11q0-1.700-1.800-1.700T7.500 14H5q-1 0-1-1v-2.500Q1 10.500 1 8.500T4 6.500V4q0-1 1-1z" strokeLinejoin="round" /></Line>
    </IconButton>
    <ToolDivider />
    <IconButton $w={49} aria-label="Podziel ekran">
      <Line sw={1.2}><path d="M6 3H2Q.8 3 .8 4.200v7.600Q.8 13 2 13h4V3M10 3h4q1.200 0 1.200 1.200v7.600q0 1.200-1.200 1.200h-4zM8 .5v15" /></Line>
    </IconButton>
    <IconButton $w={43} aria-label="Ulubione">
      <Line sw={1.2}><path d="M9 5L7 .8 5 5.500l-4.500.6L4 9.500 3 15l4-2.300M10 5.500h6M9 9h7M9.500 12.500H16" strokeLinejoin="round" /></Line>
    </IconButton>
    <IconButton aria-label="Kolekcje">
      <Line sw={1.2}><rect x="5" y="5" width="10.500" height="10.500" rx="2" /><path d="M10.200 7.500v5.500M7.500 10.200H13M3 12Q1 11 1 9L.8 4Q1 1 3.500 1L10 .8q2 .2 2.500 2.200" /></Line>
    </IconButton>
    <IconButton aria-label="Stan przeglądarki">
      <Line sw={1.2}><path d="M8 14L2 8Q0 5 2 2.500 5 .5 8 3.500 11 .5 14 2.500 16 5 14 8M0 7h4l1.500-2.500L8 9l1.500-2H12" /><circle cx="12.500" cy="12.500" r="3.300" fill="#4bb04f" stroke="none" /></Line>
    </IconButton>
    <IconButton $w={48} aria-label="Profil">
      <Avatar><Svg $w={12} viewBox="0 0 12 14" fill="#7d7d7d"><circle cx="6" cy="4" r="3.400" /><path d="M0 8.500h12q0 5.500-6 5.500T0 8.500z" /></Svg></Avatar>
    </IconButton>
    <IconButton aria-label="Więcej"><Svg viewBox="0 0 16 16" fill="#fff"><circle cx="2" cy="8" r="1.200" /><circle cx="8" cy="8" r="1.200" /><circle cx="14" cy="8" r="1.200" /></Svg></IconButton>
    <IconButton $w={48} aria-label="Bing">
      <Svg $w={30} viewBox="0 0 30 30">
        <path d="M1 29q1-4 1-8V14Q2 1 15 1t13.500 13.500Q28 28 15 28 9 29 1 29z" fill="#15233a" stroke="url(#bing)" strokeWidth="1.500" />
        <path d="M10 6l4 1.500v13l-4-2.500zM14 20.500l6-3.500-3-1.500L15 11l7 3q1 4-2 6l-6 4-4-3v-3z" fill="url(#bing)" />
      </Svg>
    </IconButton>
  </Toolbar>
);

const BookmarkRow = () => (
  <Bookmarks>
    {bookmarks.map(({ text, w, icon }, i) => (
      <Bookmark key={i} href="#" aria-label={text || 'Zakładka'}>
        {icon}
        {text && <BookmarkText $w={w}>{text}</BookmarkText>}
      </Bookmark>
    ))}
    <BookmarkMore aria-label="Więcej zakładek"><Line w={12} box="0 0 12 12" color="#fff" sw={1.2}><path d="M3 0l6 6-6 6" /></Line></BookmarkMore>
  </Bookmarks>
);

const sideIcons = [
  ['Szukaj', <Svg $w={18} viewBox="0 0 18 18"><path d="M11.500 11.500l4.500 5" stroke="#d04bf0" strokeWidth="3.500" strokeLinecap="round" /><circle cx="7.500" cy="7.500" r="5.800" fill="#2b6f8f" stroke="#b8b8b8" strokeWidth="2.400" /></Svg>],
  ['Zakupy', <Svg $w={18} viewBox="0 0 18 18"><path d="M9 2l7-1q1.500 0 1.500 1.500L17 10l-7 7q-1.500 1-3 0l-5-6Q1 9.500 2 8.500z" fill="url(#tagBlue)" /><circle cx="13.500" cy="5" r="1.700" fill="#3b3b3b" stroke="#ffc83d" /></Svg>],
  ['Narzędzia', <Svg $w={18} viewBox="0 0 18 18"><path d="M5 5V3.500Q5 2 6.500 2h5Q13 2 13 3.500V5" fill="none" stroke="#a0a0a0" strokeWidth="1.500" /><rect x="0.500" y="5" width="17" height="11" rx="1" fill="#c4390f" /><rect y="5" width="18" height="5" rx="1" fill="#f4683c" /><rect x="7.500" y="8.500" width="3" height="3" fill="#ddd" /></Svg>],
  ['Gry', <Svg $w={18} viewBox="0 0 18 18"><path d="M9.500 0h2v2h1.500V0h2v2h1.500V0h2v4l-2 1v7h1v2H11V5L9.500 4z" fill="url(#purple)" /><circle cx="5" cy="6" r="3" fill="#b8b8b8" /><path d="M1 9h8v1.500H7.500l1 4 1.500 3H0l1.500-3 1-4H1z" fill="#989898" /></Svg>],
  ['Microsoft 365', <M365 w={19} />],
  ['Outlook', <OutlookLogo w={18} />],
  ['Obrazy', <Svg $w={18} viewBox="0 0 18 18"><rect x="1" y="0.500" width="14" height="13" rx="1.500" fill="#b26bf5" /><path d="M2 12q4-9 8-1l3-3 1 5H2z" fill="#1fa05a" /><circle cx="11" cy="4" r="1.500" fill="#fff" /><path d="M18 6l-6.500 8-2-1.500z" fill="#8fb6ff" /><path d="M8 18q0-5 3.500-4 1.500 3-3.500 4z" fill="#ffb900" /><path d="M0 16q2-2 3 0t4 0" fill="none" stroke="#1fa05a" /></Svg>],
  ['Drop', <Svg $w={18} viewBox="0 0 18 18"><path d="M0 4l18-1-6 12-4-4z" fill="#2e8df0" /><path d="M0 4l18-1L7 8v6L5 8z" fill="#ffc02e" /><path d="M18 3L8 9l5 6z" fill="#52b6ff" /></Svg>],
  ['Drzewo', <Svg $w={18} viewBox="0 0 18 18"><path d="M9 .5q5 0 5.500 4.500 2 2 1 5Q14 13 11 12H7Q4 13 2.500 10q-1-3 1-5Q4 .5 9 .5z" fill="#25a56a" /><path d="M7.500 12h3v4.500q-1.500 1-3 0z" fill="#f5a31a" /><path d="M11 2.500v5M8.500 5h5" stroke="#ffb52e" strokeWidth="1.600" /></Svg>],
  ['Dodaj', <Line w={12} box="0 0 12 12"><path d="M6 0v12M0 6h12" /></Line>],
];

const Side = () => (
  <SideBar>
    {sideIcons.map(([name, icon]) => <IconButton key={name} $h={40} aria-label={name}>{icon}</IconButton>)}
    <SideSpacer />
    <SideRule />
    <IconButton $h={40} aria-label="Ukryj pasek boczny"><Line w={14} box="0 0 14 14" sw={1.2}><rect x="1" y="1" width="12" height="12" rx="1.500" /><path d="M9.500 1v12" /></Line></IconButton>
    <IconButton $h={40} aria-label="Ustawienia"><Gear w={18} /></IconButton>
  </SideBar>
);

const ExcelHeader = () => (
  <ExcelTop>
    <FileInfo>
      <IconButton $w={14} aria-label="Uruchamianie aplikacji">
        <Svg $w={14} viewBox="0 0 14 14" fill="#333">
          {[1.5, 7, 12.5].map((y) => [1.5, 7, 12.5].map((x) => <circle key={`${x}-${y}`} cx={x} cy={y} r="1.200" />))}
        </Svg>
      </IconButton>
      <LogoSlot><ExcelLogo w={15} /></LogoSlot>
      <FileName>Sailplane Calc V-Tail Metric May 2016</FileName>
      <Svg $w={13} viewBox="0 0 13 13"><path d="M3 9Q.5 9 .5 6.500T3 4.500Q3.500 1 7 1t3.500 3" fill="none" stroke="#333" /><circle cx="8.500" cy="8" r="4.300" fill="#333" /><path d="M6.500 8l1.500 1.500 2.500-3" fill="none" stroke="#fff" /></Svg>
      <Chevron w={8} color="#666" />
    </FileInfo>
    <SearchBox>
      <SearchGlyph w={14} color="#777" />
      <input type="search" placeholder="Wyszukaj (Alt + M)" aria-label="Wyszukaj" />
    </SearchBox>
    <AccountArea>
      <BuyLink href="#">
        <Line w={14} box="0 0 14 14" color="#333"><path d="M3 1h8l2.500 4L7 13.500.5 5zM.5 5h13M3 1l2 4 2 8 2-8 2-4M5 5l2-4 2 4" strokeLinejoin="round" /></Line>
        Kup platformę Microsoft 365
      </BuyLink>
      <IconButton $h={30} aria-label="Ustawienia"><Gear w={15} color="#555" /></IconButton>
      <UserBadge>MP</UserBadge>
    </AccountArea>
  </ExcelTop>
);

const Menu = () => (
  <MenuRow>
    <MenuTabs>
      {menuTabs.map((t) => <MenuTab key={t} href="#" $active={t === 'Narzędzia główne'}>{t}</MenuTab>)}
    </MenuTabs>
    <ActionGroup>
      <Action $w={92}><Line w={14} box="0 0 14 14"><path d="M1 1.500h12v8.500H6l-3 3v-3H1z" /></Line>Komentarze</Action>
      <Action $w={103}><Line w={14} box="0 0 14 14"><path d="M1 13l1-4L10 1q1-.8 2.200.3T12.800 4L5 12zM9 2l3 3" /></Line>Edytowanie<Chevron w={9} /></Action>
      <Action $w={101} $primary><Line w={14} box="0 0 14 14"><path d="M5 4H1v9h10v-3M4 10q0-5 5-5.500V2l4.500 4L9 9.500V7Q6 7 4 10z" /></Line>Udostępnij<Chevron w={9} /></Action>
    </ActionGroup>
  </MenuRow>
);

const GridIcon = ({ accent, children, dim }) => (
  <Svg $w={17} viewBox="0 0 17 17" fill="none" opacity={dim ? 0.45 : 1} stroke={dim ? '#666' : '#222'}>
    <path d="M1 1.500h15v14H1zM1 6h15M1 11h15M6 1.500v14M11 1.500v14" />
    {accent}
    {children}
  </Svg>
);

const brush = (
  <>
    <path d="M16.500 4.500L10 12l2 1.500 5-8z" fill="#fff" stroke="#555" />
    <path d="M10 11.500l2 2q-2 3.500-6 2.500 2-1 2-3 .5-1.500 2-1.500z" fill="#2b7fc0" stroke="#555" />
  </>
);

const RibbonBar = () => (
  <RibbonWrap>
    <Ribbon>
      <Group>
        <Tool aria-label="Cofnij"><Line w={17} color="#aaa" sw={1.2}><path d="M1 1v6h6M1.500 6.500Q6 1 11 3q4 2.500 2 6.500L7 15" /></Line><Chevron /></Tool>
        <Tool aria-label="Wklej"><Line w={17} h={18} box="0 0 16 18" sw={1.4}><path d="M5 3H2v13.500h12V3h-3" /><path d="M5 5V2.500h1.500Q8 0 9.500 2.500H11V5z" /></Line><Chevron /></Tool>
        <Tool aria-label="Malarz formatów"><Svg $w={17} viewBox="0 0 18 18"><path d="M17 1l-5 5M10 4l5 5-1.500 1.500L8.500 5.500z" fill="none" stroke="#444" strokeWidth="1.400" /><path d="M2 8q4 0 6.500-2.500l5 5Q12 13 9 17q-1-2-2-2l.5-2-2.500.5.5-2q-2 .5-3.500-3.500z" fill="#fbc08a" stroke="#e0771a" strokeWidth="1.300" /></Svg></Tool>
      </Group>
      <Group $dim $start={4} $end={8} $gap={11}>
        <FontBox>
          <SelectShell $w={114}><select disabled aria-label="Czcionka"><option>Arial</option></select><Chevron /></SelectShell>
          <SelectShell $w={46}><select disabled aria-label="Rozmiar"><option>10</option></select><Chevron /></SelectShell>
        </FontBox>
        <Tool aria-label="Zwiększ czcionkę"><Line w={20} h={17} box="0 0 19 17"><path d="M1.500 15.500L7 3l5.500 12.500M3.500 11h7" /><path d="M14 4l2-2.500L18 4" stroke="#7fb4e0" /></Line></Tool>
        <Tool aria-label="Zmniejsz czcionkę"><Line w={19} h={17} box="0 0 19 17"><path d="M3 15.500L7.500 5 12 15.500M4.500 12h6" /><path d="M14 1.500L16 4l2-2.500" stroke="#7fb4e0" /></Line></Tool>
        <Tool aria-label="Pogrubienie"><Glyph $bold>B</Glyph></Tool>
        <Tool aria-label="Kursywa"><Glyph $italic>I</Glyph></Tool>
        <Tool aria-label="Podkreślenie"><Glyph $deco="underline">U</Glyph></Tool>
        <Tool aria-label="Przekreślenie"><Glyph $size={14} $deco="line-through">ab</Glyph></Tool>
        <Tool aria-label="Podwójne podkreślenie"><Glyph $w={17} $deco="underline double">D</Glyph></Tool>
        <Tool aria-label="Obramowania"><Line w={17}><path d="M1 1h14v13H1zM8 1v13M1 7.500h14" strokeDasharray="1 1" /><path d="M0 15h16" strokeWidth="1.500" /></Line><Chevron /></Tool>
        <Tool aria-label="Kolor wypełnienia"><Line w={17} box="0 0 18 18"><path d="M3 8l6-6 5 6-5 4.500zM9 2V0" /><path d="M14 6q2 3 1.500 6" stroke="#7fb4e0" strokeWidth="2" /><path d="M0 16h18" stroke="#ffff8a" strokeWidth="4" /></Line><Chevron /></Tool>
        <Tool aria-label="Kolor czcionki"><Line w={17} box="0 0 18 18"><path d="M4.500 11.500L9 1l4.500 10.500M6 8h6" /><path d="M0 16h18" stroke="#ff9a9a" strokeWidth="4" /></Line><Chevron /></Tool>
      </Group>
      <Group $dim $gap={12} $end={7}>
        <Tool aria-label="Wyrównanie"><Line w={17}><path d="M0 1.500h11M0 6h16M0 10.500h11M0 15h16" /></Line><Chevron /></Tool>
        <Tool><Line w={16}><path d="M4.500 2.500V7M4.500 4.700Q4 2.500 2.500 2.500T1 4.700 2.500 7 4.500 5M8.500 0v7M8.500 4.700q.5-2.200 2-2.200t2 2.200-2 2.300T8.500 5M5 10Q1.500 9 1.500 12T5 14.500" /><path d="M14 8v4H7.500M10 9.500L7.500 12l2.500 2.500" stroke="#7fb4e0" strokeWidth="1.300" /></Line>Zawijaj</Tool>
        <Tool><Line w={16}><path d="M1 1h14v14H1zM8 1v3M8 12v3" /><path d="M1 4.500h14v7H1z" stroke="#7fb4e0" fill="#e4f1fb" /><path d="M3.500 8h9M5.500 6L3.500 8l2 2M10.500 6l2 2-2 2" stroke="#5ba5dd" strokeWidth="1.300" /></Line>Scal<Chevron /></Tool>
      </Group>
      <Group $dim $start={4} $end={10} $gap={12}>
        <SelectShell $w={114} $framed><select aria-label="Format liczb"><option>Liczbowe</option></select><Chevron color="#444" /></SelectShell>
        <Tool aria-label="Walutowe"><Glyph $size={17}>$</Glyph><Chevron /></Tool>
        <Tool aria-label="Zwiększ dziesiętne"><Line w={16}><path d="M7 4H1M3.500 1.500L1 4l2.500 2.500" stroke="#7fb4e0" /><rect x="10.500" y="0.500" width="4" height="6" rx="2" /><rect x="5.500" y="9.500" width="3.500" height="6" rx="1.700" /><rect x="11" y="9.500" width="3.500" height="6" rx="1.700" /><path d="M3 14.500l-1 2" /></Line></Tool>
        <Tool aria-label="Zmniejsz dziesiętne"><Line w={16}><path d="M0 12h6M3.500 9.500L6 12l-2.500 2.500" stroke="#7fb4e0" /><rect x="5.500" y="0.500" width="3.500" height="6" rx="1.700" /><rect x="11" y="0.500" width="3.500" height="6" rx="1.700" /><rect x="11" y="9.500" width="3.500" height="6" rx="1.700" /><path d="M3 5.500l-1 2M9 14.500l-1 2" /></Line></Tool>
      </Group>
      <Group $dim $end={10}>
        <Tool aria-label="Formatowanie warunkowe"><GridIcon dim accent={<path d="M5 1.500h4.500V6H5zM5 11h6.500v4.500H5zM5 6h3v5H5z" fill="#ff8f8f" stroke="#e05050" />} /><Chevron /></Tool>
        <Tool aria-label="Formatuj jako tabelę"><GridIcon dim accent={<path d="M6 6h10v9.500H6z" fill="#a8d4f5" stroke="#4a9ad8" />}>{brush}</GridIcon><Chevron /></Tool>
        <Tool aria-label="Style komórki"><GridIcon dim accent={<path d="M6 5h5v6H6z" fill="#a8d4f5" stroke="#4a9ad8" />}>{brush}</GridIcon><Chevron /></Tool>
      </Group>
      <Group>
        <Tool aria-label="Wstaw"><GridIcon accent={<path d="M6 6h12v5H6z" fill="#3a96dd" stroke="#0f5a9c" />}><path d="M1 5h5v7H1z" fill="#fff" stroke="none" /><path d="M9 8.500H0M3 5.500l-3 3 3 3" stroke="#1f8ad8" strokeWidth="1.500" /></GridIcon><Chevron /></Tool>
        <Tool aria-label="Usuń"><GridIcon accent={<path d="M3 6h7v5H3z" fill="#3a96dd" stroke="#0f5a9c" />}><rect x="10.500" y="4" width="7" height="8.500" fill="#fff" stroke="none" /><path d="M11 5l6 7M17 5l-6 7" stroke="#e03a3a" strokeWidth="1.300" /></GridIcon><Chevron /></Tool>
        <Tool aria-label="Formatuj"><GridIcon accent={<path d="M5 6h7v5H5z" fill="#3a96dd" stroke="#0f5a9c" />}><path d="M4 0h9v3H4z" fill="#fff" stroke="none" /><path d="M3.500-.5v3M13.500-.5v3M3.500 1h10" stroke="#6bb8ea" strokeWidth="1.300" /></GridIcon><Chevron /></Tool>
      </Group>
      <Group $end={10}>
        <Tool aria-label="Autosumowanie"><Line w={17} sw={1.2}><path d="M14 4V1H2l7 7-7 7h12v-3" /></Line><Chevron /></Tool>
        <Tool aria-label="Wyczyść"><Svg $w={17} viewBox="0 0 17 17"><path d="M11 .8L16 6l-9 10-6-5.500z" fill="#fff" stroke="#9b3fa8" strokeWidth="1.200" /><path d="M4.500 7l6 5.200L7 16l-6-5.500z" fill="#d48fdd" stroke="#9b3fa8" /></Svg><Chevron /></Tool>
        <Tool aria-label="Sortuj i filtruj"><Line w={17} color="#aaa"><path d="M1 7l2.500-6.500L6 7M2 5h3" stroke="#7fb4e0" /><path d="M1 9.500h5l-5 6h5M7.500 4.500H16v2L13 9.500V14h-2.500V9.500L7.500 6.500z" /></Line><Chevron color="#aaa" /></Tool>
        <Tool aria-label="Znajdź"><SearchGlyph w={17} /><Chevron /></Tool>
      </Group>
      <Group>
        <Tool aria-label="Dodatki"><Line w={17} color="#d0441c" sw={1.3}><path d="M.7.7h14.600v14.600H.7zM3 3.500h3.500V7H3zM9.500 3.500H13V7H9.500zM3 9.500h3.500V13H3zM9.500 9.500H13V13H9.500z" /></Line><Chevron /></Tool>
      </Group>
      <RibbonEnd aria-label="Opcje wstążki"><Chevron /></RibbonEnd>
    </Ribbon>
  </RibbonWrap>
);

const Formula = () => (
  <FormulaBar>
    <NameBox><input defaultValue="C43" aria-label="Pole nazwy" /><Svg $w={6} viewBox="0 0 6 6"><path d="M.5 2L3 4.500 5.500 2" fill="none" stroke="#333" strokeWidth="1.300" /></Svg></NameBox>
    <FxBox>
      <IconButton $w={26} $color="#b5b5b5" aria-label="Anuluj"><Line w={12} box="0 0 12 12"><path d="M0 0l12 12M12 0L0 12" /></Line></IconButton>
      <IconButton $w={26} $color="#b5b5b5" aria-label="Zatwierdź"><Line w={14} box="0 0 14 12"><path d="M0 6l5 5L14 1" /></Line></IconButton>
      <FxLabel aria-label="Wstaw funkcję">fx</FxLabel>
    </FxBox>
    <FormulaInput><input defaultValue="23,8" aria-label="Pasek formuły" /><Chevron /></FormulaInput>
  </FormulaBar>
);

// Plot area origin is (58, 117); 200 mm is 87px wide and 50 mm is 36px high.
const Chart = () => (
  <ChartFloat viewBox="0 0 598 173" role="img" aria-label="Wykres skrzydła">
    <path d="M.5 0v172.500h597V0" fill="#fff" stroke="#bdbdbd" />
    <rect x="58" y="0" width="520" height="117" fill="#c0c0c0" />
    <path d="M58 9h520M58 45h520M58 81h520M144.500 0v117M231.500 0v117M318 0v117M404.500 0v117M491 0v117" stroke="#b4b4b4" />
    <path d="M577.500 0v117" stroke="#999" />
    <path d="M58 117.500h520" stroke="#555" strokeWidth="1.500" />
    <path d="M144.500 118v3M231.500 118v3M318 118v3M404.500 118v3M491 118v3M577.500 118v3M55 117h3M55 81h3M55 45h3M55 9h3" stroke="#999" />
    <g fill="none" stroke="#800000" strokeWidth="2">
      <path d="M58 0v117l153-12 125-30 112-32 41-13L463 0" />
      <path d="M211 0v105M336 0v75M448 0v43" />
    </g>
    <path d="M234 0v94" stroke="#0000e0" strokeWidth="3" />
    <path d="M53 4.500h10" stroke="#00f" strokeWidth="2" />
    <path d="M58 21h177" stroke="#f00" strokeWidth="2" strokeDasharray="10 9" strokeDashoffset="2" />
    <path d="M58 16l4 8h-8z" fill="#f00" />
    <g textAnchor="end">
      <text x="46" y="12">150</text>
      <text x="46" y="48">100</text>
      <text x="46" y="84">50</text>
      <text x="46" y="120">0</text>
    </g>
    <g textAnchor="middle">
      {[0, 200, 400, 600, 800, 1000, 1200].map((v, i) => (
        <text key={v} x={56 + Math.round(i * 86.6)} y="132">{v}</text>
      ))}
    </g>
    <text x="298" y="151" fontSize="12" fontWeight="700">mm</text>
    <text transform="translate(24 27) rotate(-90)" fontSize="12" fontWeight="700">mm</text>
  </ChartFloat>
);

const GridRow = ({ row }) => {
  const out = [];
  for (let i = 0; i < columns.length; i += 1) {
    const key = columns[i][0];
    const c = row.cells?.[key];
    if (!c) {
      out.push(<Cell key={key} />);
    } else {
      out.push(
        <Cell key={key} colSpan={c.span} $clip={c.clip} $fill={c.fill}>
          {c.text && (
            <CellText $align={c.align} $indent={c.indent} $color={c.color} $kind={c.kind}>{c.text}</CellText>
          )}
          {c.mark && <CommentMark />}
          {c.selected && <Selection />}
        </Cell>
      );
      i += (c.span || 1) - 1;
    }
  }
  return (
    <tr>
      <RowHead scope="row" $h={row.h} $on={row.on}>{row.n}</RowHead>
      {out}
    </tr>
  );
};

const Workbook = () => (
  <SheetArea>
    <SheetView>
      <Sheet>
        <colgroup>
          <col width="33" />
          {columns.map(([name, w]) => <col key={name} width={w} />)}
        </colgroup>
        <thead>
          <tr>
            <Corner />
            {columns.map(([name]) => <HeadCell key={name} scope="col" $on={name === 'C'}>{name}</HeadCell>)}
          </tr>
        </thead>
        <tbody>
          {rows.map((row) => <GridRow key={row.n} row={row} />)}
        </tbody>
      </Sheet>
      <Chart />
    </SheetView>
    <ScrollTrack $vertical>
      <ScrollArrow $vertical aria-label="W górę"><Svg $w={8} viewBox="0 0 8 8"><path d="M0 6l4-4 4 4z" fill="currentColor" /></Svg></ScrollArrow>
      <ScrollGap $size={106} />
      <ScrollThumb $size={354} />
      <ScrollGap $size={215} />
      <ScrollArrow $vertical aria-label="W dół"><Svg $w={8} viewBox="0 0 8 8"><path d="M0 2l4 4 4-4z" fill="currentColor" /></Svg></ScrollArrow>
    </ScrollTrack>
    <ScrollTrack>
      <ScrollArrow aria-label="W lewo"><Svg $w={8} viewBox="0 0 8 8"><path d="M6 0L2 4l4 4z" fill="currentColor" /></Svg></ScrollArrow>
      <ScrollThumb $size={693} />
      <ScrollGap $size={1096} />
      <ScrollArrow aria-label="W prawo"><Svg $w={8} viewBox="0 0 8 8"><path d="M2 0l4 4-4 4z" fill="currentColor" /></Svg></ScrollArrow>
    </ScrollTrack>
  </SheetArea>
);

const Tabs = () => (
  <SheetTabs>
    <TabNav>
      <IconButton $w={22} $color="#c4c4c4" aria-label="Poprzedni"><Line w={10} box="0 0 10 10"><path d="M7 0L2 5l5 5" /></Line></IconButton>
      <IconButton $w={34} $color="#c4c4c4" aria-label="Następny"><Line w={10} box="0 0 10 10"><path d="M3 0l5 5-5 5" /></Line></IconButton>
      <IconButton $w={24} $color="#555" aria-label="Wszystkie arkusze"><Line w={10} box="0 0 10 10" sw={1.2}><path d="M0 .6h10M0 5h10M0 9.400h10" /></Line></IconButton>
    </TabNav>
    {sheetTabs.map((t) => (
      <SheetTab key={t} href="#" $active={t === 'Balance Point'}><Lock />{t}</SheetTab>
    ))}
    <IconButton $w={10} $color="#c4c4c4" aria-label="Nowy arkusz"><Line w={10} box="0 0 10 10" sw={1.5}><path d="M5 0v10M0 5h10" /></Line></IconButton>
  </SheetTabs>
);

const Status = () => (
  <StatusBar>
    <StatusItem>Tryb obliczeń: Automatycznie</StatusItem>
    <StatusItem>Statystyki skoroszytu</StatusItem>
    <StatusEnd>
      <Svg $w={6} viewBox="0 0 6 6"><path d="M.5 2L3 4.500 5.500 2" fill="none" stroke="#555" strokeWidth="1.300" /></Svg>
      <a href="#">Przekaż opinię firmie Microsoft</a>
      <IconButton $w={18} aria-label="Pomniejsz"><Line w={10} box="0 0 10 10"><path d="M0 5h10" /></Line></IconButton>
      <IconButton $w={42}>100%</IconButton>
      <IconButton $w={14} aria-label="Powiększ"><Line w={10} box="0 0 10 10"><path d="M5 0v10M0 5h10" /></Line></IconButton>
    </StatusEnd>
  </StatusBar>
);

const apps = [
  { name: 'Start', icon: <Svg $w={24} viewBox="0 0 24 24"><path d="M0 0h11.500v11.500H0zM12.500 0H24v11.500H12.500zM0 12.500h11.500V24H0zM12.500 12.500H24V24H12.500z" fill="url(#win)" /></Svg> },
  { name: 'Szukaj', icon: <Svg $w={24} viewBox="0 0 24 24"><circle cx="11" cy="11" r="9" fill="#444" stroke="#f0f0f0" strokeWidth="2.200" /><path d="M17 18l5 5" stroke="#ccc" strokeWidth="2.500" /></Svg> },
  { name: 'Edge', icon: <EdgeLogo />, open: true },
  { name: 'Visual Studio Code', icon: <Svg $w={24} viewBox="0 0 24 24"><path d="M17 0l7 3v18l-7 3L2 10.500l-2-2L2 6.500l15 11z" fill="#1b7fcc" /><path d="M17 0l7 3v18l-7 3V6.500L2 17.500l-2-2z" fill="#2aa5f2" /></Svg> },
  {
    name: 'Slack',
    icon: (
      <Svg $w={24} viewBox="0 0 24 24">
        <circle cx="12" cy="12" r="12" fill="#fff" />
        <g strokeWidth="3" strokeLinecap="round">
          <path d="M10 6v4M5.500 10H6" stroke="#36c5f0" /><path d="M5.500 10H10" stroke="#36c5f0" />
          <path d="M14 5.500V10M18.500 10h-.1" stroke="#2eb67d" />
          <path d="M14 14h4.500M14 18.500v-.1" stroke="#ecb22e" />
          <path d="M10 14v4.500M5.500 14h.1" stroke="#e01e5a" />
        </g>
      </Svg>
    ),
  },
  { name: 'Eksplorator', open: true, icon: <Svg $w={24} viewBox="0 0 24 24"><path d="M0 2q0-1 1-1h7l3 3v4H0z" fill="#e09a10" /><rect y="4" width="24" height="19" rx="1.500" fill="url(#folder)" /><path d="M4 23v-5q0-2 2-2h11q2 0 2 2v5z" fill="#1583d8" /><path d="M8 19.500h7" stroke="#0a5596" strokeWidth="2" /></Svg> },
  {
    name: 'IDE',
    icon: (
      <Svg $w={24} viewBox="0 0 24 24">
        <rect width="24" height="24" fill="#35b0ea" />
        <text x="12" y="16.500" textAnchor="middle" fontSize="11" fontWeight="700" fill="#fff" fontFamily="Open Sans, sans-serif">IDE</text>
      </Svg>
    ),
  },
  {
    name: 'Chrome', open: true,
    icon: (
      <Svg $w={24} viewBox="0 0 24 24">
        <circle cx="12" cy="13" r="11.500" fill="#fbc116" />
        <path d="M12 13L2 7Q6 1.500 12 1.500T22 7z" fill="#ea4335" />
        <path d="M2 7l6 9 4 8.500Q.5 24 .5 13q0-3 1.500-6z" fill="#34a853" />
        <circle cx="12" cy="13" r="5.500" fill="#4285f4" stroke="#fff" strokeWidth="1.500" />
        <circle cx="20.500" cy="3" r="7.500" fill="#f06a0c" />
        <text x="20.500" y="6" textAnchor="middle" fontSize="9" fill="#fff" fontFamily="Open Sans, sans-serif">M</text>
      </Svg>
    ),
  },
  { name: 'Microsoft 365', icon: <M365 w={24} /> },
  { name: 'Outlook', icon: <OutlookLogo w={24} /> },
  { name: 'Slicer', open: true, icon: <Svg $w={24} viewBox="0 0 24 24"><circle cx="12" cy="12" r="12" fill="#fff" /><path d="M5 16Q3 6 10 5q5-1 8 1z" fill="#2f3136" /><path d="M19 7.500Q21 14 17 18q-4 3-9.500.500z" fill="#f26a2e" /></Svg> },
  { name: 'Edge (osobisty)', icon: <EdgeLogo person="#fff" face="#777" />, active: true },
  {
    name: 'Fusion 360', open: true,
    icon: (
      <Svg $w={24} viewBox="0 0 24 24">
        <path d="M1 2l4-2v20l-4 3z" fill="#ff9a5a" />
        <path d="M5 0h18v17H1V3z" fill="#ff6b00" />
        <path d="M1 17h22v7H1z" fill="#7a3208" />
        <text x="13" y="14" textAnchor="middle" fontSize="14" fontWeight="700" fill="#fff" fontFamily="Open Sans, sans-serif">F</text>
        <text x="13" y="23" textAnchor="middle" fontSize="6" fontWeight="700" fill="#fff" fontFamily="Open Sans, sans-serif">360</text>
      </Svg>
    ),
  },
];

const Bottom = () => (
  <Taskbar>
    <Apps>
      {apps.map(({ name, icon, open, active }) => (
        <AppButton key={name} aria-label={name} $open={open} $active={active}>{icon}</AppButton>
      ))}
    </Apps>
    <Tray>
      <IconButton $w={24} aria-label="Ukryte ikony"><Line w={10} box="0 0 10 10" sw={1.5}><path d="M0 7.500l5-5 5 5" /></Line></IconButton>
      <IconButton $w={24} aria-label="OneDrive"><Svg viewBox="0 0 16 16"><path d="M4 12Q0 12 0 8.500 0 6 3 5q1-4 5-4 3.500 0 5 3.500V12z" fill="#b5b5b5" /><circle cx="12" cy="11.500" r="4.500" fill="#d92c2c" /><path d="M10 9.500l4 4M14 9.500l-4 4" stroke="#fff" strokeWidth="1.300" /></Svg></IconButton>
      <IconButton $w={24} aria-label="Płytka dotykowa"><Line sw={1.3}><rect x="1" y="2" width="14" height="12" rx="2" /><path d="M1 9h14M8 9v5" /></Line></IconButton>
      <IconButton $w={78} aria-label="Sieć, dźwięk, bateria">
        <Line w={74} h={16} box="0 0 74 16" sw={1.3}>
          <path d="M5 6.500q8-7 16 0M7.500 9q5.500-5 11 0M10 11.500q3-3 6 0" /><circle cx="13" cy="13.500" r="0.800" fill="#fff" />
          <path d="M30 6h3l4-4v12l-4-4h-3zM39.500 5.500q2 2.500 0 5" /><path d="M42 3.500q3.500 4.500 0 9M44 2q4.500 6 0 12" stroke="#777" />
          <path d="M55 4.500h13v9H55z" /><path d="M57 6.500h9v5h-9z" fill="#fff" /><path d="M70 7v4M56 0l-2 4h3l-2 4" />
        </Line>
      </IconButton>
      <Clock>00:50<br />10.08.2023</Clock>
      <Badge>1</Badge>
    </Tray>
  </Taskbar>
);

const App = () => {
  return (
    <>
      <GlobalStyle />
      <Screen>
        <TopTabs />
        <AddressRow />
        <Middle>
          <PageColumn>
            <BookmarkRow />
            <ExcelHeader />
            <Menu />
            <RibbonBar />
            <Formula />
            <Workbook />
            <Tabs />
            <Status />
          </PageColumn>
          <Side />
        </Middle>
        <Bottom />
      </Screen>
      <Defs />
    </>
  );
};

export default App;
